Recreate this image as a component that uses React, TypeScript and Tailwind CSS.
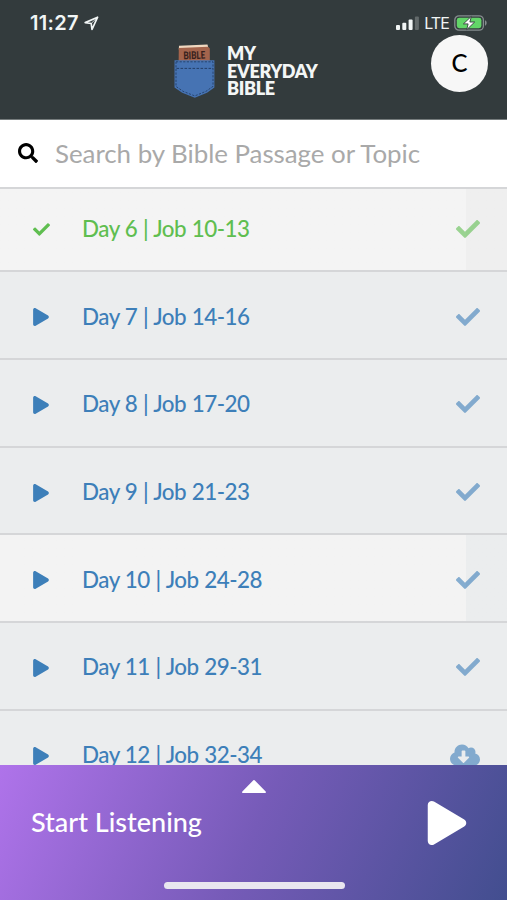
import clsx from "clsx";
import {
  FaCheck,
  FaCloudDownloadAlt,
  FaPlay,
  FaSearch,
} from "react-icons/fa";

interface Reading {
  id: number;
  passage: string;
  status: "done" | "saved" | "remote";
  progress?: boolean;
}

const readings: Reading[] = [
  { id: 6, passage: "Job 10-13", status: "done", progress: true },
  { id: 7, passage: "Job 14-16", status: "saved" },
  { id: 8, passage: "Job 17-20", status: "saved" },
  { id: 9, passage: "Job 21-23", status: "saved" },
  { id: 10, passage: "Job 24-28", status: "saved", progress: true },
  { id: 11, passage: "Job 29-31", status: "saved" },
  { id: 12, passage: "Job 32-34", status: "remote" },
];

const StatusBar = () => (
  <div className="flex h-[46px] items-center justify-between pl-[30px] pr-[19px] text-[#f1f5f5]">
    <div className="flex items-center gap-[5px]">
      <span className="font-['Inter',sans-serif] text-[20px] font-semibold leading-none tracking-[0.3px]">
        11:27
      </span>
      <svg width="15" height="15" viewBox="0 0 15 15" fill="none">
        <path
          d="M13.6 1.2 1.2 6.6l6 .9.8 6Z"
          stroke="currentColor"
          strokeWidth="1.7"
          strokeLinejoin="round"
        />
        <path d="M13.6 1.2 7.2 7.5" stroke="currentColor" strokeWidth="0.8" />
      </svg>
    </div>
    <div className="flex items-center gap-[5px]">
      <svg width="23" height="14" viewBox="0 0 23 14" fill="currentColor">
        <rect x="0" y="9" width="4" height="5" rx="1" />
        <rect x="6.3" y="6.7" width="4" height="7.3" rx="1" />
        <rect x="12.6" y="3.5" width="4" height="10.5" rx="1" />
        <rect x="18.9" y="0.5" width="4" height="13.5" rx="1" opacity="0.25" />
      </svg>
      <span className="font-['Inter',sans-serif] text-[16px] leading-none tracking-[-0.9px]">
        LTE
      </span>
      <svg width="34" height="16" viewBox="0 0 34 16">
        <rect
          x="0.8"
          y="0.8"
          width="28.6"
          height="14.4"
          rx="4.2"
          fill="none"
          stroke="#858d8e"
          strokeWidth="1.3"
        />
        <path d="M31 5.3c2.2.8 2.2 4.6 0 5.4Z" fill="#858d8e" />
        <rect x="2.8" y="2.8" width="24.6" height="10.4" rx="2.4" fill="#62d668" />
        <path
          d="m17.4 1.3-8 7.6h4.7l-1.4 5.8 8-7.7h-4.8Z"
          fill="#fff"
          stroke="#333b3d"
          strokeWidth="0.9"
        />
      </svg>
    </div>
  </div>
);

const PocketLogo = () => (
  <svg width="42" height="55" viewBox="0 0 42 55">
    <path d="M5 1.8 33.5.6l1 4.2L4.8 5.6Z" fill="#f0d8c0" />
    <path d="M4.8 4 34 2.8l1.8 1.8v15H4.6Z" fill="#a4644c" />
    <text
      x="20.3"
      y="15"
      textAnchor="middle"
      textLength="22"
      lengthAdjust="spacingAndGlyphs"
      fill="#37211d"
      transform="rotate(-2 20 12)"
      className="font-['Lato',sans-serif] text-[10.5px] font-black"
    >
      BIBLE
    </text>
    <path d="M.5 16.2h39.9V43.5L33 48.8l-12.2 5L8.2 48.8.5 43.5Z" fill="#4673b3" />
    <path
      d="M2 17.8h37v24.6L32 47.3l-11.2 4.6L9 47.3l-7-4.9Z"
      fill="none"
      stroke="#243f68"
      strokeWidth="0.9"
      strokeDasharray="2.2 1.4"
    />
    <path
      d="M2.5 24.4h36.5"
      stroke="#243f68"
      strokeWidth="1"
      strokeDasharray="2.6 1.4"
    />
  </svg>
);

const Header = () => (
  <header className="relative h-[120px] shrink-0 border-b border-[#767c7d] bg-[#333b3d]">
    <StatusBar />
    <div className="-mt-[2px] flex gap-[11px] pl-[174px]">
      <PocketLogo />
      <h1 className="pt-px font-['Lato',sans-serif] text-[18px] font-extrabold leading-[17.6px] tracking-[-0.35px] text-[#f3f6f6]">
        MY
        <br />
        EVERYDAY
        <br />
        BIBLE
      </h1>
    </div>
    <button className="absolute right-[19px] top-[35px] flex size-[57px] items-center justify-center rounded-full bg-[#f7f7f7] pb-px font-['Lato',sans-serif] text-[24px] font-medium text-black">
      C
    </button>
  </header>
);

const ReadingRow = ({ id, passage, status, progress }: Reading) => {
  const done = status === "done";
  return (
    <li
      className={clsx(
        "flex h-[87.7px] shrink-0 items-center border-b-2 border-[#d5d6d8] pl-[32.5px] pr-[27.5px]",
        done ? "text-[#5fbe50]" : "text-[#3d7fb9]",
        !progress && "bg-[#ebedee]",
        progress &&
          (done
            ? "bg-linear-to-r from-[#f4f4f4] from-[466px] to-[#efefef] to-[466px]"
            : "bg-linear-to-r from-[#f3f3f3] from-[466px] to-[#ebedee] to-[466px]"),
      )}
    >
      <div className="w-[49.5px] pt-[4px]">
        {done ? (
          <FaCheck size={17} />
        ) : (
          <FaPlay size={18} className="-ml-[0.5px]" />
        )}
      </div>
      <span className="grow pt-[3px] font-['Lato',sans-serif] text-[22.4px] font-medium leading-none tracking-[-0.5px] [word-spacing:0.5px]">
        Day {id} | {passage}
      </span>
      <div className="pt-[3px] opacity-60">
        {status === "remote" ? (
          <FaCloudDownloadAlt className="h-[24px] w-[30px]" />
        ) : (
          <FaCheck size={24} />
        )}
      </div>
    </li>
  );
};

const Player = () => (
  <footer className="flex h-[135px] shrink-0 flex-col items-center bg-linear-[114deg] from-[#af73ea] via-[#765bb8] via-50% to-[#424e8f] text-white">
    <svg width="26" height="14" viewBox="0 0 26 14" className="mt-[15px]">
      <path
        d="M13 1 24 12.2H2Z"
        fill="currentColor"
        stroke="currentColor"
        strokeWidth="1.8"
        strokeLinejoin="round"
      />
    </svg>
    <div className="flex w-full items-center justify-between pl-[31px] pr-[38px] pt-[7px]">
      <span className="-mt-[4px] font-['Lato',sans-serif] text-[27px] font-medium leading-none">
        Start Listening
      </span>
      <FaPlay size={44} />
    </div>
    <div className="mt-auto mb-[11px] ml-px h-[7px] w-[181px] rounded-full bg-[#e9e6ef]" />
  </footer>
);

const App = () => {
  return (
    <div className="flex h-[900px] w-[507px] flex-col overflow-hidden bg-[#ebedee]">
      <Header />
      <div className="flex h-[69px] shrink-0 items-center gap-[17px] border-b-2 border-[#d5d6d8] bg-white pl-[18px]">
        <FaSearch size={20} className="-mt-[2px]" />
        <span className="pt-px font-['Lato',sans-serif] text-[25.9px] leading-none tracking-[-0.03px] text-[#a9a9a9]">
          Search by Bible Passage or Topic
        </span>
      </div>
      <div className="h-[576px] shrink-0 overflow-hidden">
        <ul className="-mt-[4.3px] flex flex-col">
          {readings.map((reading) => (
            <ReadingRow key={reading.id} {...reading} />
          ))}
        </ul>
      </div>
      <Player />
    </div>
  );
};

export default App;
